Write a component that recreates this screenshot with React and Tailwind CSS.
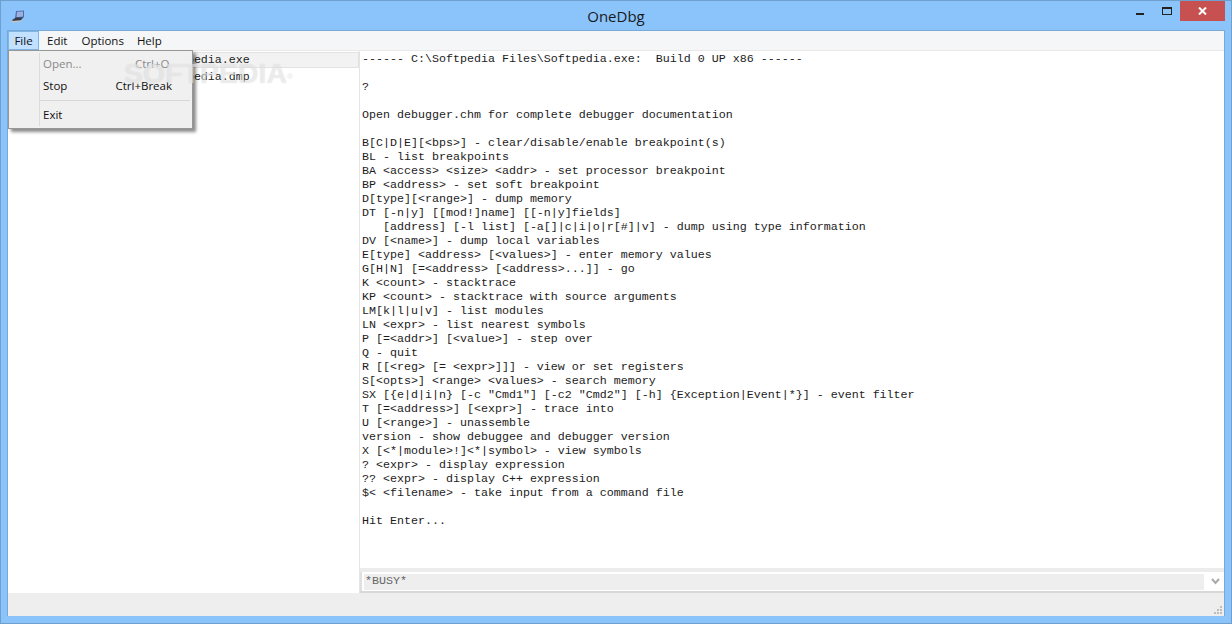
const LINES = [
"------ C:\\Softpedia Files\\Softpedia.exe:  Build 0 UP x86 ------",
"",
"?",
"",
"Open debugger.chm for complete debugger documentation",
"",
"B[C|D|E][<bps>] - clear/disable/enable breakpoint(s)",
"BL - list breakpoints",
"BA <access> <size> <addr> - set processor breakpoint",
"BP <address> - set soft breakpoint",
"D[type][<range>] - dump memory",
"DT [-n|y] [[mod!]name] [[-n|y]fields]",
"   [address] [-l list] [-a[]|c|i|o|r[#]|v] - dump using type information",
"DV [<name>] - dump local variables",
"E[type] <address> [<values>] - enter memory values",
"G[H|N] [=<address> [<address>...]] - go",
"K <count> - stacktrace",
"KP <count> - stacktrace with source arguments",
"LM[k|l|u|v] - list modules",
"LN <expr> - list nearest symbols",
"P [=<addr>] [<value>] - step over",
"Q - quit",
"R [[<reg> [= <expr>]]] - view or set registers",
"S[<opts>] <range> <values> - search memory",
"SX [{e|d|i|n} [-c \"Cmd1\"] [-c2 \"Cmd2\"] [-h] {Exception|Event|*}] - event filter",
"T [=<address>] [<expr>] - trace into",
"U [<range>] - unassemble",
"version - show debuggee and debugger version",
"X [<*|module>!]<*|symbol> - view symbols",
"? <expr> - display expression",
"?? <expr> - display C++ expression",
"$< <filename> - take input from a command file",
"",
"Hit Enter...",
];

const ui = { fontFamily: '"Open Sans","Noto Sans",sans-serif' };
const mono = { fontFamily: '"Liberation Mono",monospace' };

function AppIcon() {
  return (
    <svg width="14" height="13" viewBox="0 0 14 13" className="shrink-0">
      <path d="M5 1 L13 0.5 L13 7 L11.5 8.5 L4 8.5 Z" fill="#4a6cb0" />
      <path d="M6 1.8 L12 1.5 L12 6.5 L5.5 7.2 Z" fill="#9db0dc" />
      <path d="M1 10 L5 7.5 L12 7.5 L9.5 10.5 L2 11 Z" fill="#3a3a42" />
      <path d="M0 11 L10 10.5 L10.5 12 L1.5 12.5 Z" fill="#c4c4c8" />
    </svg>
  );
}

function MenuRow({ label, shortcut, disabled }) {
  return (
    <div className={`flex items-center justify-between h-[22px] pl-[34px] pr-[20px] ${disabled ? "text-[#8a8a8a]" : "text-[#111]"}`}>
      <span>{label}</span>
      {shortcut && <span>{shortcut}</span>}
    </div>
  );
}

export default function App() {
  return (
    <div className="relative w-[1232px] h-[624px] overflow-hidden bg-[#8ac4fb] border border-[#6f9fcc] flex flex-col text-[11.5px]" style={ui}>
      <div className="relative h-[29px] shrink-0 flex items-center pl-[10px]">
        <div className="mt-[2px]"><AppIcon /></div>
        <div className="absolute inset-x-0 top-[5px] text-center text-[15px] leading-[20px] text-[#1a1a1a]">OneDbg</div>
        <div className="ml-auto flex items-start self-start">
          <div className="relative w-[26px] h-[20px]">
            <div className="absolute left-0 top-[12px] w-[8px] h-[2px] bg-[#222]" />
          </div>
          <div className="relative w-[18px] h-[20px]">
            <div className="absolute left-0 top-[6px] w-[10px] h-[8px] border border-[#222] border-t-[2px]" />
          </div>
          <div className="w-[45px] h-[20px] bg-[#c75050] flex items-center justify-center mr-[6px]">
            <svg width="9" height="8" viewBox="0 0 9 8"><path d="M1 0.5 L8 7.5 M8 0.5 L1 7.5" stroke="#fff" strokeWidth="2" /></svg>
          </div>
        </div>
      </div>

      <div className="mx-[6px] mb-[7px] flex-1 flex flex-col min-h-0 bg-white border border-[#79a9d6] border-b-0">
        <div className="h-[20px] shrink-0 bg-[#f5f6f7] border-b border-[#e8e8e8] flex items-center text-[#111]">
          <div className="h-[19px] w-[31px] bg-[#c2e0ff] border border-[#7fb4e6] flex items-center justify-center">File</div>
          <div className="ml-[8px]">Edit</div>
          <div className="ml-[14px]">Options</div>
          <div className="ml-[13px]">Help</div>
        </div>

        <div className="flex-1 flex min-h-0">
          <div className="w-[352px] shrink-0 border-r border-[#e4e4e4] pt-px text-[11.67px] leading-[14px] text-[#222]" style={mono}>
            <div className="h-[16px] pl-[17px] bg-[#f2f2f2] border border-[#e2e2e2] flex items-center whitespace-pre">C:\Softpedia Files\Softpedia.exe</div>
            <div className="h-[14px] pl-[18px] mt-[-2px] pt-[4px] whitespace-pre box-content">C:\Softpedia Files\Softpedia.dmp</div>
          </div>

          <div className="flex-1 flex flex-col min-w-0">
            <div className="flex-1 min-h-0 overflow-hidden pt-[1px] pl-[2px] text-[11.67px] leading-[14px] text-[#1c1c1c] whitespace-pre" style={mono}>
              {LINES.map((l, i) => <div key={i} className="h-[14px]">{l}</div>)}
            </div>
            <div className="h-[25px] shrink-0 border-t-[4px] border-b-[2px] border-t-[#ececec] border-b-[#d8d8d8] flex items-center">
              <div className="w-[2px] h-full bg-[#e0e0e0]" />
              <div className="ml-[2px] w-[840px] h-[16px] bg-[#eeeeee] pl-[1px] flex items-center text-[11.67px] text-[#666]" style={mono}>*BUSY*</div>
              <svg width="9" height="7" viewBox="0 0 9 7" className="ml-[7px]"><path d="M1 1 L4.5 5 L8 1" fill="none" stroke="#aaa" strokeWidth="2" /></svg>
            </div>
          </div>
        </div>

        <div className="relative h-[23px] shrink-0 bg-[#eeeeee]">
          <div className="absolute right-[2px] bottom-[2px] w-[8px] h-[8px]">
            <svg width="8" height="8" viewBox="0 0 8 8" fill="#bdbdbd">
              <rect x="6" y="0" width="2" height="2" /><rect x="3" y="3" width="2" height="2" /><rect x="6" y="3" width="2" height="2" />
              <rect x="0" y="6" width="2" height="2" /><rect x="3" y="6" width="2" height="2" /><rect x="6" y="6" width="2" height="2" />
            </svg>
          </div>
        </div>
      </div>

      <div className="absolute left-[7px] top-[49px] w-[185px] h-[79px] bg-[#f0f0f0] border border-[#979797] shadow-[3px_3px_3px_rgba(0,0,0,0.45)] pt-[2px]">
        <div className="absolute left-[30px] top-[2px] bottom-[2px] w-px bg-[#dcdcdc]" />
        <MenuRow label="Open..." disabled />
        <div className="absolute left-[126px] top-[2px] h-[22px] flex items-center text-[#8a8a8a]">Ctrl+O</div>
        <MenuRow label="Stop" shortcut="Ctrl+Break" />
        <div className="ml-[30px] mr-[2px] my-[3px] h-px bg-[#d7d7d7]" />
        <MenuRow label="Exit" />
      </div>

      <div className="absolute left-[123px] top-[57px] text-[28.5px] leading-[30px] font-bold text-white/55 [text-shadow:0_0_1px_rgba(0,0,0,0.18)] pointer-events-none whitespace-pre" style={{ fontFamily: '"Liberation Sans",sans-serif' }}>SOFTPEDIA<sup className="text-[8px] font-normal">®</sup></div>
    </div>
  );
}
